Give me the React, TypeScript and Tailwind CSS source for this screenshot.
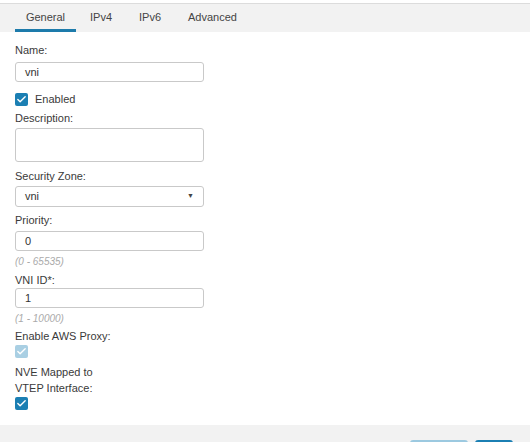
import { Check } from 'lucide-react';

const tabs = ['General', 'IPv4', 'IPv6', 'Advanced'];

function Box({ light }: { light?: boolean }) {
    return (
        <span
            className={`flex h-[13px] w-[13px] items-center justify-center rounded-[2px] ${
                light ? 'bg-[#a9cfe3]' : 'bg-[#1b7fb3]'
            }`}
        >
            <Check size={11} strokeWidth={3} className="text-white" />
        </span>
    );
}

const Label = ({ children, className = '' }: { children: React.ReactNode; className?: string }) => (
    <div className={`text-[11px] leading-[14px] text-[#3a3a3a] ${className}`}>{children}</div>
);

const Input = ({ value, className = '' }: { value: string; className?: string }) => (
    <div
        className={`flex h-[20px] w-[189px] items-center rounded-[3px] border border-[#c9c9c9] px-[9px] text-[11px] text-[#333] ${className}`}
    >
        {value}
    </div>
);

const Hint = ({ children }: { children: React.ReactNode }) => (
    <div className="mt-[5px] text-[10px] leading-[12px] italic text-[#aaa]">{children}</div>
);

export default function App() {
    return (
        <div className="flex h-[442px] w-[530px] flex-col overflow-hidden bg-white font-['Liberation_Sans',Arial,sans-serif]">
            <div className="mt-[3px] flex h-[29px] border-t border-[#dcdcdc] bg-[#f2f2f2] pl-[15px]">
                {tabs.map((t, i) => (
                    <div
                        key={t}
                        className={`flex h-full items-center text-[11px] text-[#444] ${
                            i === 0
                                ? 'w-[61px] justify-center border-b-[3px] border-[#1d7bab] pt-[1px]'
                                : i === 1
                                  ? 'ml-[14px] pb-[2px]'
                                  : 'ml-[27px] pb-[2px]'
                        }`}
                    >
                        {t}
                    </div>
                ))}
            </div>

            <div className="flex-1 px-[15px] pt-[11px]">
                <Label>Name:</Label>
                <Input value="vni" className="mt-[5px]" />

                <div className="mt-[11px] flex h-[13px] items-center gap-[7px]">
                    <Box />
                    <span className="text-[11px] text-[#3a3a3a]">Enabled</span>
                </div>

                <Label className="mt-[5px]">Description:</Label>
                <div className="mt-[3px] h-[34px] w-[189px] rounded-[3px] border border-[#c9c9c9]" />

                <Label className="mt-[7px]">Security Zone:</Label>
                <div className="mt-[3px] flex h-[21px] w-[189px] items-center justify-between rounded-[3px] border border-[#c9c9c9] px-[9px] text-[11px] text-[#333]">
                    <span>vni</span>
                    <span className="text-[7px] text-[#444]">▼</span>
                </div>

                <Label className="mt-[6px]">Priority:</Label>
                <Input value="0" className="mt-[4px]" />
                <Hint>(0 - 65535)</Hint>

                <Label className="mt-[5px]">VNI ID*:</Label>
                <Input value="1" className="mt-[1px]" />
                <Hint>(1 - 10000)</Hint>

                <Label className="mt-[4px]">Enable AWS Proxy:</Label>
                <div className="mt-[2px]">
                    <Box light />
                </div>

                <div className="mt-[6px] text-[11px] leading-[16px] text-[#3a3a3a]">
                    NVE Mapped to
                    <br />
                    VTEP Interface:
                </div>
                <div className="mt-[1px]">
                    <Box />
                </div>
            </div>

            <div className="relative h-[17px] bg-[#f2f2f2]">
                <div className="absolute left-[410px] top-[15px] h-[6px] w-[58px] rounded-[3px] bg-[#9cc9e0]" />
                <div className="absolute left-[475px] top-[15px] h-[6px] w-[38px] rounded-[3px] bg-[#1b7fb3]" />
            </div>
        </div>
    );
}
